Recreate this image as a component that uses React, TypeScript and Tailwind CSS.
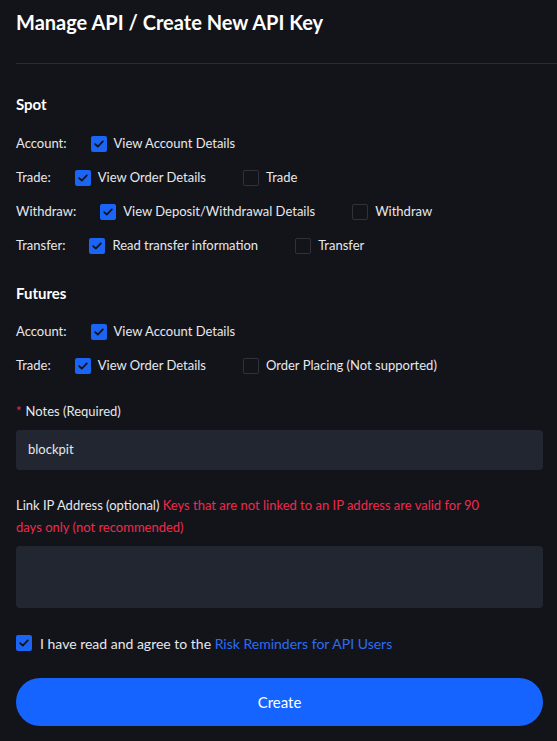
import type { ReactNode } from 'react';

function Box({ checked }: { checked: boolean }) {
  if (!checked) {
    return <span className="inline-block w-4 h-4 rounded-[2px] border border-[#2f323b] shrink-0" />;
  }
  return (
    <span className="inline-flex items-center justify-center w-4 h-4 rounded-[2px] bg-[#1a64f6] shrink-0">
      <svg width="10" height="8" viewBox="0 0 10 8" fill="none">
        <path d="M1.2 4.1 3.8 6.6 8.8 1.4" stroke="#13141a" strokeWidth="1.8" strokeLinecap="round" strokeLinejoin="round" />
      </svg>
    </span>
  );
}

function Option({ checked, children }: { checked: boolean; children: ReactNode }) {
  return (
    <label className="flex items-center gap-[7px] mr-[37px]">
      <Box checked={checked} />
      <span>{children}</span>
    </label>
  );
}

type Row = { label: string; opts: { text: string; on: boolean }[] };

const spot: Row[] = [
  { label: 'Account', opts: [{ text: 'View Account Details', on: true }] },
  { label: 'Trade', opts: [{ text: 'View Order Details', on: true }, { text: 'Trade', on: false }] },
  { label: 'Withdraw', opts: [{ text: 'View Deposit/Withdrawal Details', on: true }, { text: 'Withdraw', on: false }] },
  { label: 'Transfer', opts: [{ text: 'Read transfer information', on: true }, { text: 'Transfer', on: false }] },
];

const futures: Row[] = [
  { label: 'Account', opts: [{ text: 'View Account Details', on: true }] },
  { label: 'Trade', opts: [{ text: 'View Order Details', on: true }, { text: 'Order Placing (Not supported)', on: false }] },
];

function PermRows({ rows }: { rows: Row[] }) {
  return (
    <div>
      {rows.map((r) => (
        <div key={r.label} className="h-[34px] flex items-center pt-[2px]">
          <span className="mr-[24px]">{r.label}:</span>
          {r.opts.map((o) => (
            <Option key={o.text} checked={o.on}>{o.text}</Option>
          ))}
        </div>
      ))}
    </div>
  );
}

export default function App() {
  return (
    <div
      className="min-h-[741px] bg-[#13141a] text-[#e6e8ec] text-[13px] pl-4 overflow-hidden"
      style={{ fontFamily: 'Lato, "Noto Sans", sans-serif' }}
    >
      <h1 className="pt-2 text-[20px] leading-[28px] font-bold text-white">Manage API / Create New API Key</h1>
      <div className="mt-[27px] h-px bg-[#2a2c33]" />

      <div className="pr-[14px]">
        <h2 className="mt-[29px] text-[15px] leading-[22px] font-bold text-white">Spot</h2>
        <div className="mt-[11px]">
          <PermRows rows={spot} />
        </div>

        <h2 className="mt-[20px] text-[15px] leading-[22px] font-bold text-white">Futures</h2>
        <div className="mt-[10px]">
          <PermRows rows={futures} />
        </div>

        <div className="mt-[19px] leading-[20px]">
          <span className="text-[#f0294e] mr-1">*</span>Notes (Required)
        </div>
        <div className="mt-[9px] h-10 rounded bg-[#222630] flex items-center px-3 text-[#e6e8ec]">blockpit</div>

        <p className="mt-[24px] leading-[22px] max-w-[475px]">
          Link IP Address (optional){' '}
          <span className="text-[#f0294e]">Keys that are not linked to an IP address are valid for 90 days only (not recommended)</span>
        </p>
        <div className="mt-2 h-[62px] rounded bg-[#222630]" />

        <div className="mt-[24px] h-[22px] flex items-center gap-2 text-[14px]">
          <Box checked />
          <span>
            I have read and agree to the <span className="text-[#2c6cf6]">Risk Reminders for API Users</span>
          </span>
        </div>

        <button className="mt-[24px] w-full h-12 rounded-full bg-[#1664ff] text-white text-[15px]">Create</button>
      </div>
    </div>
  );
}
